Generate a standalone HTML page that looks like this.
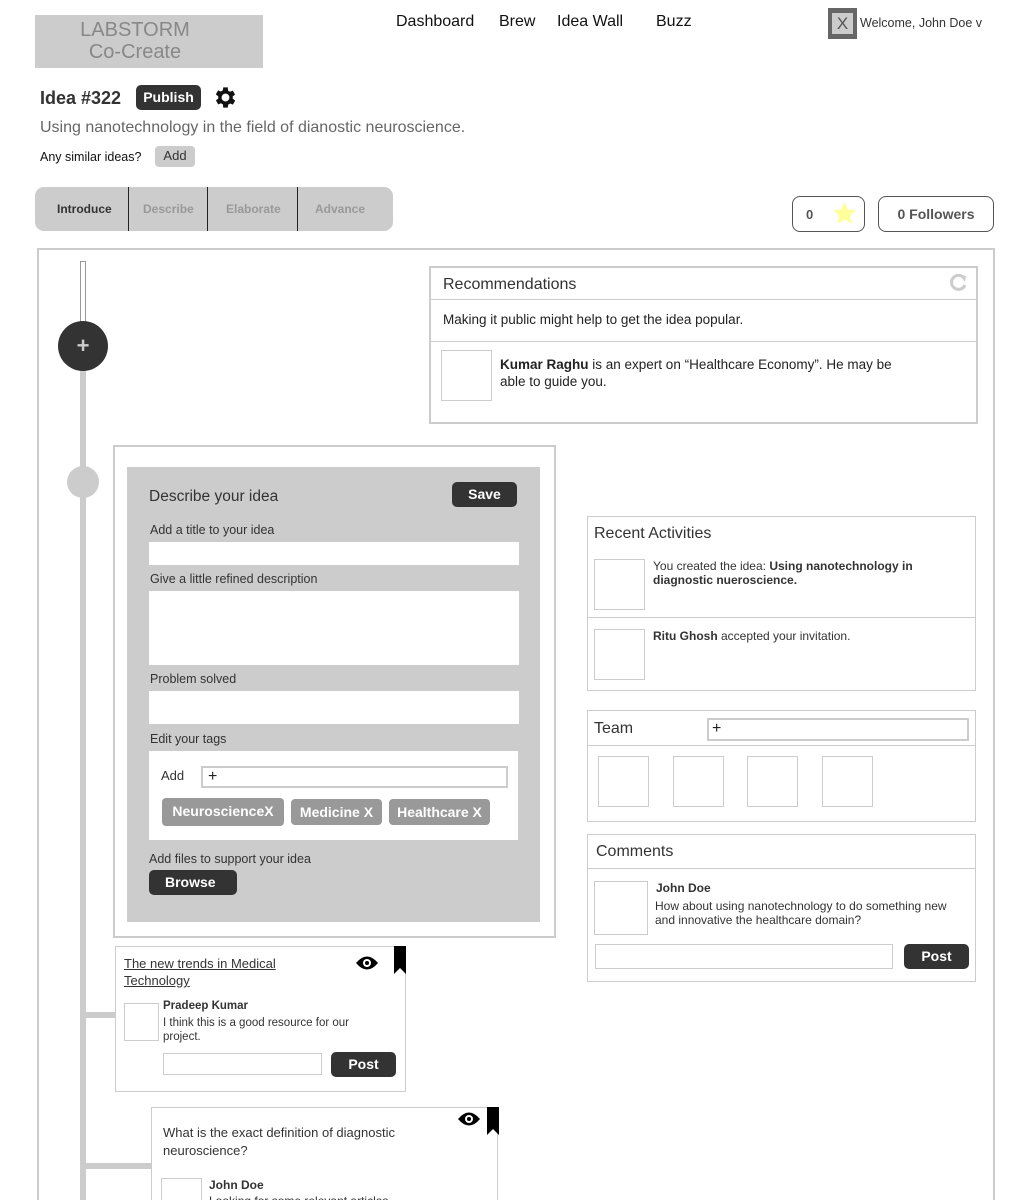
<!DOCTYPE html>
<html style="height:1200px;overflow:hidden"><head><meta charset="utf-8"><style>
*{box-sizing:border-box;margin:0;padding:0}
body{width:1024px;height:1200px;overflow:hidden;background:#fff;font-family:"Liberation Sans",sans-serif;color:#333;position:relative}
.a{position:absolute}
.box{position:absolute;border:1px solid #ccc;background:#fff}
.btn{position:absolute;background:#333;color:#fff;font-weight:bold;border-radius:5px;text-align:center}
.ph{position:absolute;border:1px solid #ccc;background:#fff}
.tag{position:absolute;background:#999;color:#fff;font-weight:bold;font-size:14px;border-radius:4px;text-align:center;line-height:26px;height:26px}
.lbl{position:absolute;color:#333;font-family:"Liberation Sans",sans-serif;font-size:12.5px}
</style></head><body>
<div class="a" style="left:35px;top:15px;width:228px;height:53px;background:#ccc;color:#888;font-size:20px;line-height:22px;text-align:center;padding-top:4px;padding-right:28px">LABSTORM<br>Co-Create</div>
<div class="a" style="left:396px;top:13px;font-size:16px;color:#111">Dashboard</div>
<div class="a" style="left:499px;top:13px;font-size:16px;color:#111">Brew</div>
<div class="a" style="left:557px;top:13px;font-size:16px;color:#111">Idea Wall</div>
<div class="a" style="left:656px;top:13px;font-size:16px;color:#111">Buzz</div>
<div class="a" style="left:828px;top:8px;width:29px;height:31px;background:#666;padding:5px 4px"><div style="background:#ccc;width:21px;height:21px;color:#555;font-size:17px;text-align:center;line-height:21px">X</div></div>
<div class="a" style="left:860px;top:16px;font-size:12.5px;color:#333">Welcome, John Doe v</div>

<div class="a" style="left:40px;top:88px;font-size:18px;font-weight:bold;color:#333">Idea #322</div>
<div class="btn" style="left:136px;top:85px;width:65px;height:25px;font-size:14px;line-height:24px">Publish</div>
<svg class="a" style="left:212px;top:84px" width="27" height="27" viewBox="0 0 24 24"><path fill="#111" d="M19.4 13a7.5 7.5 0 0 0 0-2l2.1-1.6-2-3.5-2.5 1a7.3 7.3 0 0 0-1.7-1L15 3h-4l-.4 2.7a7.3 7.3 0 0 0-1.7 1l-2.5-1-2 3.5L6.6 11a7.5 7.5 0 0 0 0 2l-2.1 1.6 2 3.5 2.5-1a7.3 7.3 0 0 0 1.7 1L11 21h4l.4-2.7a7.3 7.3 0 0 0 1.7-1l2.5 1 2-3.5zM13 15.5a3.5 3.5 0 1 1 0-7 3.5 3.5 0 0 1 0 7z" transform="translate(-1 0)"/></svg>
<div class="a" style="left:40px;top:119px;font-size:16px;color:#666">Using nanotechnology in the field of dianostic neuroscience.</div>
<div class="lbl" style="left:40px;top:150px;color:#111">Any similar ideas?</div>
<div class="a" style="left:155px;top:146px;width:40px;height:21px;background:#ccc;border-radius:4px;font-size:13px;color:#333;text-align:center;line-height:20px">Add</div>

<div class="a" style="left:35px;top:187px;width:358px;height:44px;background:#ccc;border-radius:9px"></div>
<div class="a" style="left:128px;top:187px;width:1px;height:44px;background:#222"></div>
<div class="a" style="left:207px;top:187px;width:1px;height:44px;background:#222"></div>
<div class="a" style="left:297px;top:187px;width:1px;height:44px;background:#222"></div>
<div class="a" style="left:57px;top:202px;font-size:12px;font-weight:bold;color:#333">Introduce</div>
<div class="a" style="left:143px;top:202px;font-size:12px;font-weight:bold;color:#999">Describe</div>
<div class="a" style="left:226px;top:202px;font-size:12px;font-weight:bold;color:#999">Elaborate</div>
<div class="a" style="left:315px;top:202px;font-size:12px;font-weight:bold;color:#999">Advance</div>

<div class="a" style="left:792px;top:196px;width:73px;height:36px;border:1px solid #555;border-radius:8px"></div>
<div class="a" style="left:806px;top:207px;font-size:13px;font-weight:bold;color:#555">0</div>
<svg class="a" style="left:832px;top:201px" width="25" height="25" viewBox="0 0 24 24"><path fill="#ffff99" d="M12 1l3.2 7.2 7.8.7-5.9 5.2 1.8 7.7L12 17.8 5.1 21.8l1.8-7.7L1 8.9l7.8-.7z"/></svg>
<div class="a" style="left:878px;top:196px;width:116px;height:36px;border:1px solid #555;border-radius:8px;text-align:center;line-height:34px;font-size:14px;font-weight:bold;color:#555">0 Followers</div>

<div class="a" style="left:37px;top:248px;width:958px;height:1000px;border:2px solid #ccc"></div>
<div class="a" style="left:80px;top:261px;width:6px;height:70px;border:1px solid #999;background:#fff"></div>
<div class="a" style="left:80px;top:330px;width:6px;height:880px;background:#ccc"></div>
<div class="a" style="left:58px;top:321px;width:50px;height:50px;border-radius:50%;background:#333;color:#ccc;font-size:22px;font-weight:bold;text-align:center;line-height:50px">+</div>
<div class="a" style="left:67px;top:466px;width:32px;height:32px;border-radius:50%;background:#ccc"></div>
<div class="a" style="left:85px;top:1012px;width:32px;height:6px;background:#ccc"></div>
<div class="a" style="left:85px;top:1163px;width:68px;height:6px;background:#ccc"></div>

<div class="box" style="left:429px;top:266px;width:549px;height:158px;border-width:2px"></div>
<div class="a" style="left:431px;top:299px;width:545px;height:1px;background:#ccc"></div>
<div class="a" style="left:431px;top:341px;width:545px;height:1px;background:#ccc"></div>
<div class="a" style="left:443px;top:276px;font-size:16px;color:#333">Recommendations</div>
<svg class="a" style="left:947px;top:272px" width="22" height="22" viewBox="0 0 22 22"><path d="M17 6A7 7 0 1 0 18 13" fill="none" stroke="#ccc" stroke-width="3"/><path d="M13 3l6 1-1 6z" fill="#ccc"/></svg>
<div class="a" style="left:443px;top:312px;font-size:13.5px;color:#222">Making it public might help to get the idea popular.</div>
<div class="ph" style="left:441px;top:350px;width:51px;height:51px"></div>
<div class="a" style="left:500px;top:356px;width:420px;font-size:13.5px;line-height:17px;color:#222"><b>Kumar Raghu</b> is an expert on “Healthcare Economy”. He may be able to guide you.</div>

<div class="box" style="left:113px;top:445px;width:443px;height:493px;border-width:2px"></div>
<div class="a" style="left:127px;top:467px;width:413px;height:455px;background:#ccc"></div>
<div class="a" style="left:149px;top:488px;font-size:15.5px;color:#333">Describe your idea</div>
<div class="btn" style="left:452px;top:482px;width:65px;height:25px;font-size:14px;line-height:24px">Save</div>
<div class="lbl" style="left:150px;top:523px">Add a title to your idea</div>
<div class="a" style="left:149px;top:542px;width:370px;height:23px;background:#fff"></div>
<div class="lbl" style="left:150px;top:572px">Give a little refined description</div>
<div class="a" style="left:149px;top:591px;width:370px;height:74px;background:#fff"></div>
<div class="lbl" style="left:150px;top:672px">Problem solved</div>
<div class="a" style="left:149px;top:691px;width:370px;height:33px;background:#fff"></div>
<div class="lbl" style="left:150px;top:732px">Edit your tags</div>
<div class="a" style="left:149px;top:751px;width:369px;height:89px;background:#fff"></div>
<div class="lbl" style="left:161px;top:768px;font-size:13px">Add</div>
<div class="a" style="left:201px;top:766px;width:307px;height:22px;border:2px solid #ccc;font-size:16px;line-height:17px;padding-left:5px;color:#222">+</div>
<div class="tag" style="left:162px;top:798px;width:122px;height:28px">NeuroscienceX</div>
<div class="tag" style="left:291px;top:799px;width:91px">Medicine X</div>
<div class="tag" style="left:389px;top:799px;width:101px">Healthcare X</div>
<div class="lbl" style="left:149px;top:852px">Add files to support your idea</div>
<div class="btn" style="left:149px;top:870px;width:88px;height:25px;font-size:14px;line-height:24px;text-align:left;padding-left:16px">Browse</div>

<div class="box" style="left:587px;top:516px;width:389px;height:175px"></div>
<div class="a" style="left:587px;top:617px;width:389px;height:1px;background:#ccc"></div>
<div class="a" style="left:594px;top:525px;font-size:16px;color:#333">Recent Activities</div>
<div class="ph" style="left:594px;top:559px;width:51px;height:51px"></div>
<div class="a" style="left:653px;top:559px;width:300px;font-size:12px;line-height:14px;color:#333">You created the idea: <b>Using nanotechnology in diagnostic nueroscience.</b></div>
<div class="ph" style="left:594px;top:629px;width:51px;height:51px"></div>
<div class="a" style="left:653px;top:629px;font-size:12px;color:#333"><b>Ritu Ghosh</b> accepted your invitation.</div>

<div class="box" style="left:587px;top:710px;width:389px;height:112px"></div>
<div class="a" style="left:588px;top:745px;width:388px;height:1px;background:#ccc"></div>
<div class="a" style="left:594px;top:720px;font-size:16px;color:#333">Team</div>
<div class="a" style="left:707px;top:718px;width:262px;height:23px;border:2px solid #ccc;font-size:16px;line-height:18px;padding-left:3px;color:#222">+</div>
<div class="ph" style="left:598px;top:756px;width:51px;height:51px"></div>
<div class="ph" style="left:673px;top:756px;width:51px;height:51px"></div>
<div class="ph" style="left:747px;top:756px;width:51px;height:51px"></div>
<div class="ph" style="left:822px;top:756px;width:51px;height:51px"></div>

<div class="box" style="left:587px;top:834px;width:389px;height:148px"></div>
<div class="a" style="left:587px;top:868px;width:389px;height:1px;background:#ccc"></div>
<div class="a" style="left:596px;top:843px;font-size:16px;color:#333">Comments</div>
<div class="ph" style="left:594px;top:881px;width:54px;height:54px"></div>
<div class="a" style="left:656px;top:881px;font-size:12px;font-weight:bold;color:#333">John Doe</div>
<div class="a" style="left:655px;top:899px;width:310px;font-size:12px;line-height:14px;color:#333">How about using nanotechnology to do something new and innovative the healthcare domain?</div>
<div class="ph" style="left:595px;top:944px;width:298px;height:25px"></div>
<div class="btn" style="left:904px;top:944px;width:65px;height:25px;font-size:14px;line-height:24px">Post</div>

<div class="box" style="left:115px;top:946px;width:291px;height:146px"></div>
<div class="a" style="left:124px;top:955px;font-size:13px;line-height:17px;color:#333;text-decoration:underline">The new trends in Medical<br>Technology</div>
<svg class="a" style="left:355px;top:954px" width="24" height="18" viewBox="0 0 24 18"><path d="M1 9Q12-4 23 9 12 22 1 9z" fill="#000"/><circle cx="12" cy="9" r="4" fill="#fff"/><circle cx="12" cy="9" r="2" fill="#000"/></svg>
<svg class="a" style="left:394px;top:946px" width="12" height="28" viewBox="0 0 12 28"><path d="M0 0h12v28l-6-6-6 6z" fill="#000"/></svg>
<div class="ph" style="left:124px;top:1003px;width:35px;height:38px"></div>
<div class="a" style="left:163px;top:1000px;font-size:11.5px;font-weight:bold;color:#333">Pradeep Kumar</div>
<div class="a" style="left:163px;top:1016px;width:220px;font-size:11.5px;line-height:14px;color:#333">I think this is a good resource for our project.</div>
<div class="ph" style="left:163px;top:1053px;width:159px;height:22px"></div>
<div class="btn" style="left:331px;top:1052px;width:65px;height:25px;font-size:14px;line-height:24px">Post</div>

<div class="box" style="left:151px;top:1107px;width:347px;height:120px"></div>
<div class="a" style="left:163px;top:1124px;font-size:13px;line-height:18px;color:#333">What is the exact definition of diagnostic<br>neuroscience?</div>
<svg class="a" style="left:457px;top:1110px" width="24" height="18" viewBox="0 0 24 18"><path d="M1 9Q12-4 23 9 12 22 1 9z" fill="#000"/><circle cx="12" cy="9" r="4" fill="#fff"/><circle cx="12" cy="9" r="2" fill="#000"/></svg>
<svg class="a" style="left:487px;top:1107px" width="12" height="28" viewBox="0 0 12 28"><path d="M0 0h12v28l-6-6-6 6z" fill="#000"/></svg>
<div class="ph" style="left:161px;top:1178px;width:41px;height:40px"></div>
<div class="a" style="left:209px;top:1178px;font-size:12px;font-weight:bold;color:#333">John Doe</div>
<div class="a" style="left:209px;top:1194px;font-size:12px;color:#333">Looking for some relevant articles</div>
</body></html>
